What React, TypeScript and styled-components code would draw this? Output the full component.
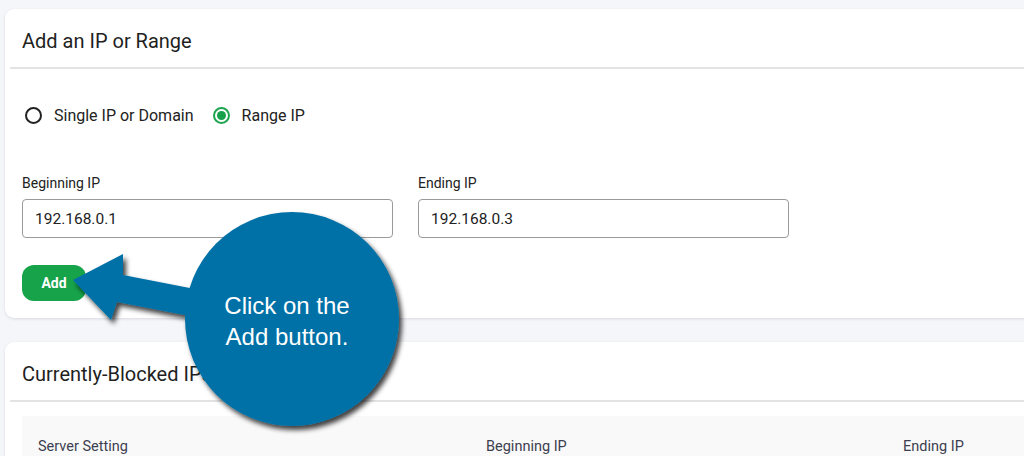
import React from "react";
import styled, { createGlobalStyle } from "styled-components";

const Global = createGlobalStyle`
  html, body { margin: 0; padding: 0; }
  body {
    background: #f5f6fa;
    font-family: Roboto, "Liberation Sans", sans-serif;
    color: #222;
    width: 1024px;
    height: 456px;
    overflow: hidden;
  }
`;

const Page = styled.div`
  position: relative;
  width: 1024px;
  height: 456px;
  padding: 9px 0 0 5px;
  box-sizing: border-box;
  display: flex;
  flex-direction: column;
  gap: 24px;
  overflow: hidden;
`;

const Card = styled.section<{ $h: number }>`
  background: #fff;
  border-radius: 9px 0 0 9px;
  box-shadow: 0 1px 3px rgba(20, 30, 60, 0.12);
  width: 1040px;
  height: ${(p) => p.$h}px;
  padding: 0 5px;
  box-sizing: border-box;
  flex-shrink: 0;
`;

const CardHeader = styled.div`
  height: 60px;
  display: flex;
  align-items: center;
  padding: 0 12px;
  border-bottom: 2px solid #e3e3e3;
  box-sizing: border-box;
`;

const Title = styled.h2`
  margin: 0;
  font-size: 20px;
  font-weight: 400;
  color: #1f1f1f;
  padding-top: 6px;
  white-space: nowrap;
`;

const CardBody = styled.div`
  padding: 0 12px;
`;

const RadioRow = styled.div`
  display: flex;
  align-items: center;
  height: 34px;
  margin-top: 29px;
  gap: 16px;
`;

const RadioOption = styled.label`
  display: flex;
  align-items: center;
  gap: 12px;
  font-size: 16px;
  color: #222;
`;

const RadioDot = styled.span<{ $on?: boolean }>`
  width: 17px;
  height: 17px;
  box-sizing: border-box;
  border-radius: 50%;
  margin-left: 3px;
  border: 2px solid ${(p) => (p.$on ? "#1ea54f" : "#222")};
  display: flex;
  align-items: center;
  justify-content: center;
  &::after {
    content: "";
    display: ${(p) => (p.$on ? "block" : "none")};
    width: 9px;
    height: 9px;
    border-radius: 50%;
    background: #17a14a;
  }
`;

const Fields = styled.div`
  display: flex;
  gap: 25px;
  margin-top: 43px;
`;

const Field = styled.div`
  display: flex;
  flex-direction: column;
  gap: 8px;
  width: 371px;
`;

const Label = styled.span`
  font-size: 14px;
  line-height: 16px;
  color: #222;
`;

const Input = styled.div`
  height: 39px;
  border: 1px solid #9a9a9a;
  border-radius: 4px;
  box-sizing: border-box;
  display: flex;
  align-items: center;
  padding: 0 12px;
  font-size: 15.5px;
  color: #222;
`;

const AddButton = styled.button`
  margin-top: 27px;
  width: 64px;
  height: 36px;
  border: none;
  border-radius: 12px;
  background: #16a34a;
  color: #fff;
  font-family: Roboto, sans-serif;
  font-weight: 700;
  font-size: 14px;
`;

const TableHead = styled.div`
  margin: 14px 0 0 12px;
  background: #f9f9f9;
  height: 60px;
  display: grid;
  grid-template-columns: 448px 417px 1fr;
  align-items: center;
  padding: 0 16px;
  font-size: 14.5px;
  color: #3b3f4f;
`;

const Overlay = styled.svg`
  position: absolute;
  left: 0;
  top: 0;
  pointer-events: none;
`;

const CalloutText = styled.div`
  position: absolute;
  left: 187px;
  top: 290px;
  width: 200px;
  text-align: center;
  color: #fff;
  font-family: "Liberation Sans", Arial, sans-serif;
  font-size: 24px;
  line-height: 31px;
`;

export default function App() {
  return (
    <>
      <Global />
      <Page>
        <Card $h={309}>
          <CardHeader>
            <Title>Add an IP or Range</Title>
          </CardHeader>
          <CardBody>
            <RadioRow>
              <RadioOption>
                <RadioDot />
                Single IP or Domain
              </RadioOption>
              <RadioOption>
                <RadioDot $on />
                Range IP
              </RadioOption>
            </RadioRow>
            <Fields>
              <Field>
                <Label>Beginning IP</Label>
                <Input>192.168.0.1</Input>
              </Field>
              <Field>
                <Label>Ending IP</Label>
                <Input>192.168.0.3</Input>
              </Field>
            </Fields>
            <AddButton>Add</AddButton>
          </CardBody>
        </Card>
        <Card $h={140}>
          <CardHeader>
            <Title>Currently-Blocked IPs</Title>
          </CardHeader>
          <TableHead>
            <span>Server Setting</span>
            <span>Beginning IP</span>
            <span>Ending IP</span>
          </TableHead>
        </Card>
        <Overlay width="1024" height="456" viewBox="0 0 1024 456">
          <defs>
            <filter id="sh" x="-20%" y="-20%" width="140%" height="140%">
              <feDropShadow dx="3" dy="4" stdDeviation="2.5" floodColor="#000" floodOpacity="0.75" />
            </filter>
          </defs>
          <g filter="url(#sh)" fill="#0271a7">
            <path d="M73 280 L123 254 L123 275 L200 290 L200 318 L117 302 L111 320 Z" />
            <circle cx="292" cy="319" r="107" />
          </g>
        </Overlay>
        <CalloutText>
          Click on the
          <br />
          Add button.
        </CalloutText>
      </Page>
    </>
  );
}
